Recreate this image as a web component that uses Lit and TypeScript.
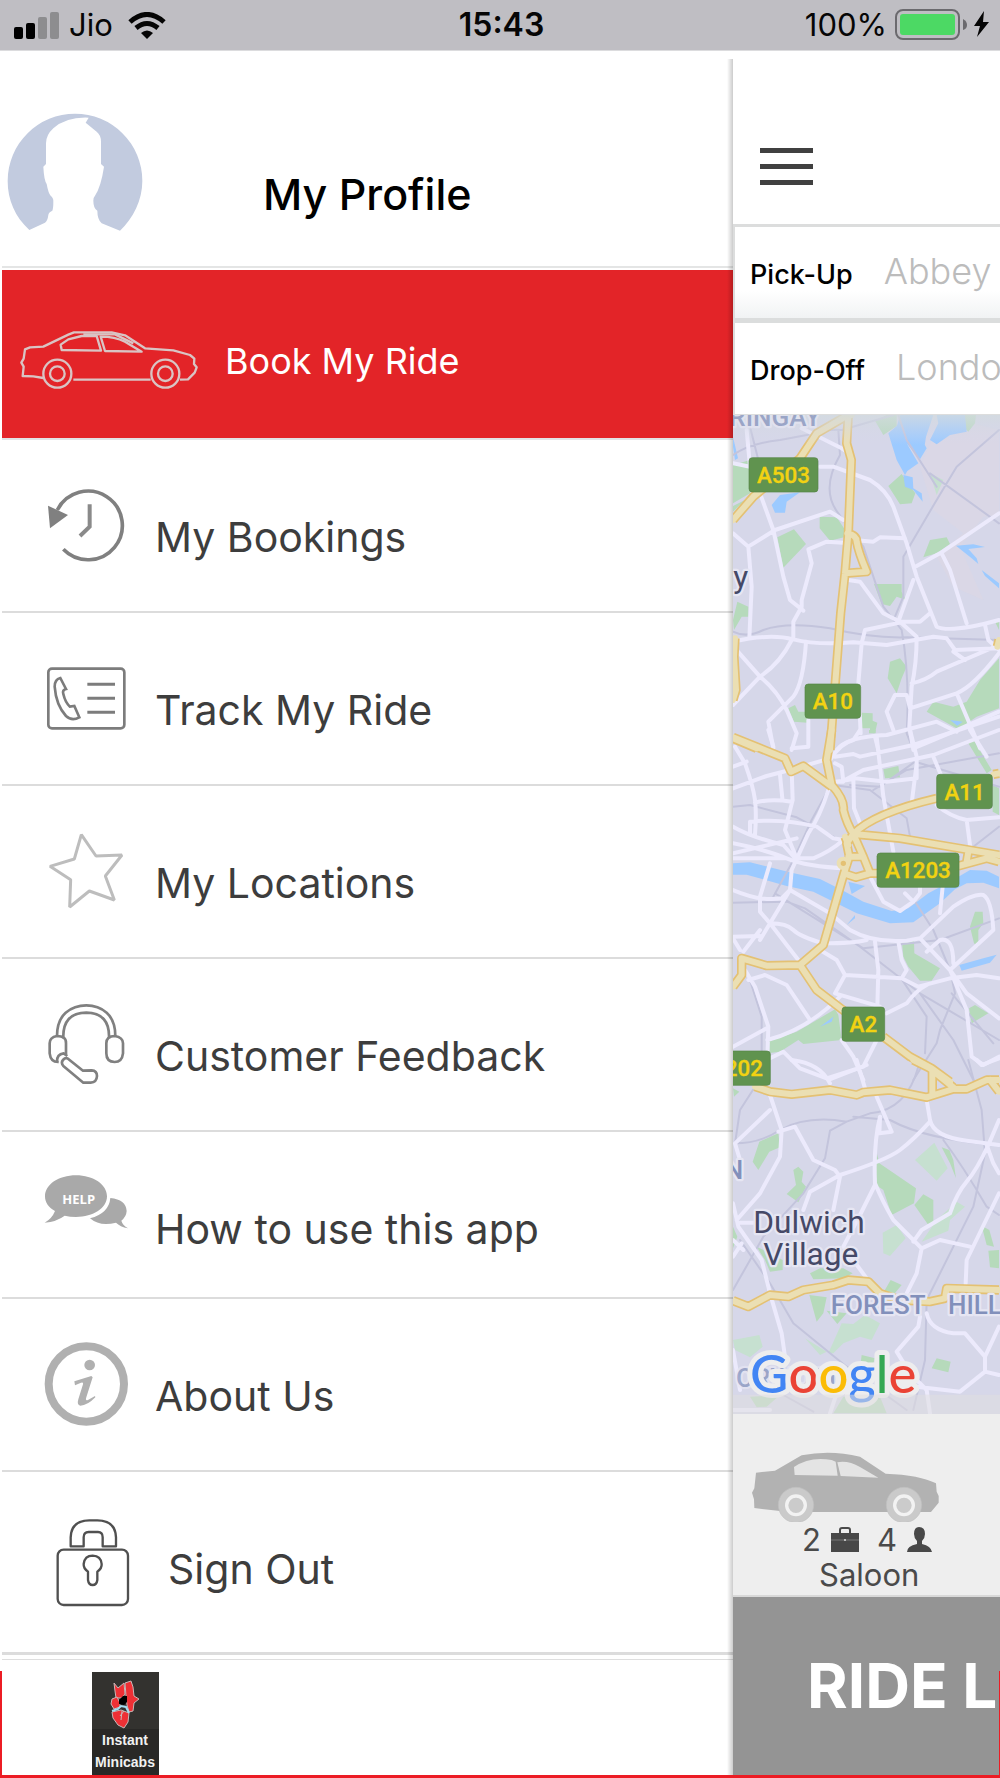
import { LitElement, html, svg, css } from "lit";
import { customElement } from "lit/decorators.js";

type Tile = { dy: number; d: string[] };

/* Map geometry. Units are thirds of a pixel; each tile covers one stretch of the map from north to south. */
const parks: Tile[] = [
  { dy: 0, d: [
    "M465 62L500 45H530V78L490 105Z", "M735 45H768L765 70 745 95 730 80Z",
    "M39 195L90 180V280L39 310Z", "M39 318L75 300 39 335Z",
    "M545 222L505 258 540 313 575 310 586 280Z",
    "M172 412L222 388 258 432 190 503Z", "M299 350L350 352 372 385V412L330 422 299 385Z",
    "M630 420L680 412 690 432 650 460 610 472Z", "M462 552H545V575L558 600 530 590 510 618 485 612Z",
    "M52 605L85 620V650L65 650 42 690 39 660Z", "M510 785L540 775 560 800 545 835 530 880 503 835Z",
    "M205 925L225 915 235 935 262 935V968L222 965Z", "M425 938L458 940V962L472 968 465 1000 450 998V985L425 985Z",
    "M837 775L780 840 740 905 700 920 640 905 620 935 715 988 770 950 837 925Z", "M825 665L837 660V690Z",
  ] },
  { dy: 990, d: [
    "M745 40L762 32 815 120 800 130Z", "M490 118L535 108 540 142 495 145Z", "M818 165L837 175V255L818 245Z", "M447 0H467V10H447Z",
    "M545 628L582 628 583 670 660 715 635 752 600 752 565 710 550 680Z", "M765 545L788 545 790 580 775 600 775 650 762 640 750 590Z",
    "M747 835L765 825 805 850 755 880Z", "M142 935L230 905 345 838 355 855 365 930 250 942 235 930 180 965 142 970Z",
  ] },
  { dy: 1980, d: [
    "M39 85L58 95 42 110Z", "M118 245L175 220 180 262 148 275 115 330 98 305Z", "M220 330L235 320 250 335 245 365 258 380 235 427 200 402 228 375Z",
    "M468 270L478 310 588 385 582 430 515 465 490 390 460 370Z", "M610 403L640 420V485L625 495 583 435Z", "M665 262L688 270 700 300 708 355 690 310Z",
    "M110 560L150 580 188 600V630L150 635 135 600Z", "M270 640L300 625 370 625 398 640 370 655 280 658Z", "M512 660L545 675 520 705 490 698Z",
    "M268 705L320 712 310 760 290 785Z", "M320 752L380 760 352 792Z", "M785 497L808 510 822 560 800 555Z", "M805 572L837 570V625L810 622Z",
    "M650 895L692 905 685 937 635 925Z", "M425 885L465 895 455 925 422 910Z", "M370 1010H480L500 1060H340Z", "M90 1010L180 1005 140 1040 110 1042Z", "M39 500L52 530 39 565Z",
  ] },
];

const lightParks: Tile[] = [
  { dy: 0, d: ["M630 220L670 240 650 285Z"] },
  { dy: 1980, d: [
    "M585 300L643 248 683 325 650 362Z", "M488 518L530 495 557 535 510 588 490 580Z", "M650 480L710 425 735 440 690 480 685 512 605 545Z",
    "M39 840L118 825 128 860 90 892 45 870Z", "M365 790L400 792 435 765 480 790 455 840 420 830 370 850 340 880 325 880Z", "M255 835L320 875 300 885Z",
  ] },
];

const heath: Tile[] = [
  { dy: 0, d: ["M720 60L837 90V345L790 350 720 440 790 600 700 560 650 470 730 400 640 330 600 200 640 110Z"] },
];

const water: Tile[] = [
  { dy: 0, d: [
    "M540 45L565 45 620 145 600 178 560 130 530 80Z", "M505 100L530 78 560 130 595 190 562 213 555 225 530 180Z",
    "M560 45H640L618 110 612 150Z", "M650 45H735L740 95 690 105 650 133 630 120 655 70Z",
    "M550 225L578 232 580 265 605 280 608 305 580 270 555 260Z", "M155 315L180 285 240 277 200 305 195 338 165 338Z",
    "M39 110L54 175 45 180 39 140Z", "M708 437L760 433 795 441 745 447 770 475 775 492 755 475Z", "M785 510L837 550V565L795 528Z",
    "M690 960L728 965 712 977Z",
  ] },
  { dy: 990, d: [
    "M39 400L90 397 215 428 300 447 370 482 430 515 515 543 565 535 625 490 690 455 750 420 800 422 837 440V475L790 458 740 460 705 478 660 520 580 577 510 580 410 550 330 510 280 485 200 468 80 434H39Z",
    "M385 455L435 468 395 492Z", "M405 555L380 585 405 565Z", "M718 705L790 685 830 674 810 698 725 722Z", "M300 890L340 860 335 875Z",
  ] },
];

const rails: Tile[] = [
  { dy: 0, d: [
    "M39 165Q90 130 180 120L260 105Q330 85 365 90L520 45", "M355 90L360 165Q300 270 355 340L400 400 430 440 490 620 545 690Q570 830 560 1000L580 1050",
    "M535 45L560 120 650 260", "M837 90L710 200 650 300 550 470V590L525 650", "M630 220L837 370", "M39 695Q80 715 130 690 200 665 330 685 450 715 560 712L837 720", "M90 80L115 180",
  ] },
  { dy: 990, d: [
    "M39 230L90 225 230 262 350 325", "M330 170L275 270 215 400 160 500", "M340 165L450 180 560 265 570 320", "M390 165L480 170 585 95 837 170", "M837 70L560 120 460 180",
    "M570 0L590 90", "M837 290L760 350", "M39 518L200 515 255 535 420 650 600 790 837 930", "M165 490L430 655 660 630 837 565", "M585 515L640 600 690 720 705 790 660 900 650 940 580 1050",
    "M540 740L620 860 615 970", "M600 790L700 930 760 1050", "M85 735L125 860V1000", "M695 790L820 940",
  ] },
  { dy: 1980, d: [
    "M105 80L60 150 45 250Q120 250 180 210 260 165 380 185L450 160Q560 150 595 20", "M380 185L330 212 315 295 250 400 130 530 39 690", "M400 170L510 180Q620 240 837 255",
    "M745 0L785 150 795 280 760 440 620 720 615 900 580 1050", "M670 240Q730 320 800 440L837 465", "M60 540L150 670 220 790 380 920 560 1050", "M190 1005L280 1055",
  ] },
];

const minor: Tile[] = [
  { dy: 0, d: [
    "M245 85L365 145 380 155", "M80 90L90 200 39 190", "M300 200H340L450 240Q500 270 520 320L560 430 590 530 650 680Q690 700 837 660", "M120 280L160 390 190 530 210 600 250 632",
    "M39 400L85 440 165 390 330 335 370 360", "M85 440L95 560 88 715", "M370 428L320 425 265 448 275 490 245 600V620L220 665V715", "M400 420L460 425 480 412 555 415", "M385 540L420 545 490 640 540 665 590 710Q590 790 575 860L568 980 580 1050",
    "M837 340L660 460 590 498", "M665 460L690 510 740 670", "M580 540L535 665H600L630 640", "M39 725Q150 700 220 718T400 727L500 735 640 710 680 715 705 750 837 745", "M540 668L435 690 425 730 415 850 422 1000",
    "M215 720Q180 790 120 830L39 915", "M45 745L120 830Q170 870 200 930L230 1000 215 1050", "M258 725Q250 850 220 890L145 965 160 1045", "M265 960V1040L215 1045", "M700 755L735 780", "M837 735L650 815Q620 840 575 850", "M837 760Q760 860 710 880L570 925 560 885H525L500 935 520 990",
    "M837 935L700 995 580 1045", "M710 880L780 1045", "M350 1050Q380 1010 500 1005L650 965 710 995", "M465 1010L475 1050", "M795 675L805 720 837 750",
  ] },
  { dy: 990, d: [
    "M45 50L75 100Q100 170 105 210T105 315", "M39 175L140 138 210 120 330 85", "M180 135L187 205", "M215 120L218 210 195 300 230 385", "M145 0L160 50", "M39 110L80 95", "M105 218Q150 205 215 215", "M325 180Q300 260 265 310L215 420 210 480 120 630",
    "M39 290Q90 320 190 345L230 390", "M90 310V275Q190 265 290 290L340 325 370 330", "M39 340Q140 360 200 385T380 415", "M39 385H200", "M39 370L230 325", "M230 385H280Q330 365 370 330", "M39 480Q120 515 185 505L210 480 330 550 390 600Q460 640 560 632L600 625 700 530Q760 490 790 495 815 510 820 600L690 720",
    "M150 400L120 500V545L150 580 235 690", "M150 580Q200 580 220 600T310 640Q400 640 440 630", "M39 620L120 618", "M70 665L120 600", "M39 625L60 660",
    "M345 100L365 110 370 155H345Q390 150 405 145L500 155 590 145V80L570 0", "M400 145L402 235 420 280", "M470 20L490 200 520 365", "M330 90Q360 40 400 30 420 0 420 0", "M345 80L400 72 420 80 580 45 837-40", "M365 155L430 120 640 75 837 0", "M640 80L665 140", "M750 0L800 80", "M590 100L575 220",
    "M650 225Q690 260 740 270L837 262", "M740 270L750 345", "M450 440L490 515 540 543 580 515 600 490V450M555 490L580 515", "M668 470L660 550",
    "M600 625L690 720 740 790 837 865", "M620 665L660 630Q700 620 700 700", "M465 635L475 720 472 830", "M535 635L545 690 560 720 545 745 595 770 690 745 770 735 837 745", "M375 735L545 745", "M300 660L350 690 375 735 345 790 480 830",
    "M75 720L105 770 145 890 142 990", "M85 750L135 735 200 765 270 870", "M39 950L140 895", "M142 930Q260 900 360 800", "M620 765Q590 780 560 820L500 850", "M690 720L740 840 755 980 790 1005 837 980", "M470 930L430 1010 320 1045 240 1015 190 965 150 985", "M365 930L400 980 430 1050",
  ] },
  { dy: 1980, d: [
    "M215 0Q300 10 330 70M325 60L440 15M410 0L435 85", "M145 90L185 210 180 290 120 400 50 480", "M150 150L45 250 60 300", "M175 215L225 200 280 300 345 330 360 350 340 450", "M600 0M620 120L630 180Q640 230 740 242L837 255", "M630 185Q580 240 540 270T360 345L270 395 250 450",
    "M470 110L515 215 478 220 480 175", "M480 170Q460 250 465 370 490 430 520 480L605 565 590 640 560 700", "M465 375L420 465 370 560 440 655", "M39 430L55 500 125 600 150 700 185 820 195 890", "M60 488H105", "M805 255Q770 330 740 365T690 460L605 510 580 545", "M605 565L660 540 750 560", "M837 400L740 600 737 670", "M800 255L820 310 837 340",
    "M837 180L805 255", "M620 760Q630 810 700 820H735L795 890V935L720 995 590 980M600 770L595 800 530 875 570 940 620 990 630 1060", "M795 890L837 800M795 935L837 945", "M39 540L70 570M39 590L65 550", "M39 1050L150 1050M39 870L60 990", "M330 1060L350 1000",
    "M770 0L785 15 837-5",
  ] },
];

const major: Tile[] = [
  { dy: 0, d: [
    "M395 45H385L380 130 394 180 385 400 375 520 362 640 345 860 330 1050", "M385 45L290 100 240 175 100 290 39 360", "M382 400Q410 405 410 425 415 455 440 515L375 520", "M45 715L42 770 48 870 39 900", "M39 1015L110 1045", "M837 720L832 740",
  ] },
  { dy: 990, d: [
    "M335 0L320 90 335 165Q375 210 370 240 380 280 400 312", "M39 22L195 85 213 125 250 108 335 170", "M837 130L820 133M650 205Q460 250 400 312L540 325 837 375", "M400 312L380 340 388 380 372 430 310 645 240 705 290 780 375 845M375 320L385 345", "M385 380H425M400 312L430 380 450 430 408 442 372 430",
    "M450 430H475M715 408L800 385 837 395M745 365L740 395", "M39 770L65 735V685L140 707 240 705", "M490 920L570 980 635 1015 690 1055",
  ] },
  { dy: 1980, d: [
    "M105 80L150 95 215 103 330 90 410 105 430 97 510 90 620 112 700 87 740 87 800 60 837 60", "M580 0L630 25 700 82M637 35V105M810 60L837 95", "M39 722L85 740 150 705 205 710 250 690 340 675 385 660 445 665 480 700 540 720 630 725 675 715 680 685 837 690",
  ] },
];

const layer = (tiles: Tile[], cls: string) => svg`
  <g class=${cls}>
    ${tiles.map((t) => svg`<path transform=${`translate(0 ${t.dy})`} d=${t.d.join(" ")}></path>`)}
  </g>`;

const shields = [
  { x: 87, y: 173, w: 207, name: "A503" },
  { x: 255, y: 852, w: 167, name: "A10" },
  { x: 650, y: 1123, w: 167, name: "A11" },
  { x: 471, y: 1359, w: 246, name: "A1203" },
  { x: 366, y: 1821, w: 128, name: "A2" },
  { x: -52, y: 1953, w: 203, name: "A202" },
];

@customElement("city-map")
export class CityMap extends LitElement {
  static styles = css`
    :host { display: block; background: #d6d7e9; }
    svg { display: block; width: 100%; height: auto; }
    .park { fill: #b6dabb; }
    .light { fill: #c6e0d0; }
    .heath { fill: #dcd7e4; opacity: 0.7; }
    .water { fill: #9ccaff; }
    .rail, .minor, .case, .major { fill: none; stroke-linejoin: round; stroke-linecap: round; }
    .rail { stroke: #c3c4dc; stroke-width: 6; }
    .minor { stroke: #eceafc; stroke-width: 12; }
    .case { stroke: #e4c173; stroke-width: 28; stroke-linecap: butt; }
    .major { stroke: #ebdfb3; stroke-width: 18; }
    .shield { fill: #60934f; stroke: #568547; stroke-width: 2; }
    .code { font: 500 67px Roboto, "Liberation Sans", sans-serif; fill: #f2d212; text-anchor: middle; stroke: #f2d212; stroke-width: 1; }
    .place { font: 400 95px Roboto, "Liberation Sans", sans-serif; fill: #454967; }
    .area { font: 500 78px Roboto, "Liberation Sans", sans-serif; fill: #8290bb; }
    .place, .area { stroke: #e6e6f3; stroke-width: 14; stroke-linejoin: round; paint-order: stroke; }
    .faded { opacity: 0.7; }
    .google { font: 500 158px Lato, "Liberation Sans", sans-serif; stroke: #ededee; stroke-width: 30; stroke-linejoin: round; paint-order: stroke; }
    .blue { fill: #4285f4; }
    .red { fill: #ea4335; }
    .yellow { fill: #fbbc05; }
    .green { fill: #34a853; }
    .veil { fill: #e0dfe0; opacity: 0.55; }
  `;

  render() {
    return html`
      <svg viewBox="39 45 801 2997" preserveAspectRatio="xMinYMin slice" role="img" aria-label="Map of London">
        <defs>
          <linearGradient id="fade" x1="0" y1="0" x2="0" y2="1">
            <stop offset="0" stop-color="#d3dbdf" stop-opacity="0.8"></stop>
            <stop offset="1" stop-color="#d6d7e9" stop-opacity="0"></stop>
          </linearGradient>
        </defs>
        ${layer(heath, "heath")} ${layer(parks, "park")} ${layer(lightParks, "light")} ${layer(water, "water")}
        ${layer(rails, "rail")} ${layer(minor, "minor")} ${layer(major, "case")} ${layer(major, "major")}
        <circle cx="370" cy="1390" r="14" fill="#e4c173" stroke="#ebdfb3" stroke-width="12"></circle>
        <rect x="39" y="45" width="801" height="90" fill="url(#fade)"></rect>
        ${shields.map((s) => svg`
          <rect class="shield" x=${s.x} y=${s.y} width=${s.w} height="103" rx="10"></rect>
          <text class="code" x=${s.x + s.w / 2} y=${s.y + 76}>${s.name}</text>`)}
        <text class="area faded" x="28" y="77">RINGAY</text>
        <text class="place" x="40" y="564">y</text>
        <text class="area" x="14" y="2337">N</text>
        <text class="place" x="100" y="2500">Dulwich</text>
        <text class="place" x="130" y="2596">Village</text>
        <text class="area" x="332" y="2742">FOREST</text>
        <text class="area" x="684" y="2742">HILL</text>
        <text class="area faded" x="48" y="2960">ORWOOD</text>
        <text class="google" x="90" y="2979"><tspan class="blue">G</tspan><tspan class="red">o</tspan><tspan class="yellow">o</tspan><tspan class="blue">g</tspan><tspan class="green">l</tspan><tspan class="red">e</tspan></text>
        <rect class="veil" x="39" y="2984" width="801" height="58"></rect>
      </svg>
    `;
  }
}

const icons = {
  bookings: svg`<svg class="icon" viewBox="6 540 459 420" aria-hidden="true">
    <path d="M190 868A103 103 0 1 0 172 750" fill="none" stroke="#808080" stroke-width="11"></path>
    <path d="M269 733V800L240 828" fill="none" stroke="#8a8a8a" stroke-width="12"></path>
    <path d="M144 737L204 765 150 805Z" fill="#808080"></path></svg>`,
  track: svg`<svg class="icon" viewBox="6 -81 459 420" aria-hidden="true">
    <g fill="none" stroke="#7c7c7c" stroke-width="8">
      <rect x="145" y="86" width="228" height="179" rx="11"></rect>
      <path d="M262 133H345M262 175H345M262 217H345" stroke-width="9"></path>
      <path d="M181 114L198 147Q186 150 190 162 196 188 210 200L223 198 238 232Q215 244 198 228 168 195 164 140 164 118 181 114Z"></path>
    </g></svg>`,
  star: svg`<svg class="icon" viewBox="6 438 459 420" aria-hidden="true">
    <path d="M244 584L288 648 366 645 316 708 343 780 268 753 209 801 212 719 150 679 223 657Z" fill="none" stroke="#bdbdbd" stroke-width="9" stroke-linejoin="bevel"></path></svg>`,
  headset: svg`<svg class="icon" viewBox="6 -63 459 420" aria-hidden="true">
    <g fill="none" stroke="#808080" stroke-width="8" stroke-linejoin="round">
      <path d="M171 168Q171 122 197 98 223 76 259 76 295 76 320 98 346 122 346 168M190 175Q187 99 259 98 330 99 327 175"></path>
      <path d="M171 168Q149 172 149 190V220Q152 247 176 246M171 168Q199 168 198 190V222"></path>
      <path d="M344 168Q369 172 369 190V220Q366 246 344 246 319 246 319 220V190Q319 168 344 168Z"></path>
      <path d="M171 246Q170 222 191 220L202 228"></path>
      <path d="M204 236L249 272 275 271Q291 272 291 288 290 307 272 308H250L190 258Q182 248 189 240 196 232 204 236Z"></path>
    </g></svg>`,
  help: svg`<svg class="icon" viewBox="6 453 459 420" aria-hidden="true">
    <path d="M331 651Q378 656 380 690 379 707 364 719 368 733 384 742 360 737 348 725 300 738 270 712 327 697 331 651Z" fill="#a9a9a9"></path>
    <path d="M228 583C280 583 321 611 321 646S280 708 228 708Q210 708 194 704 170 722 134 725 156 713 165 690C145 679 135 664 135 646 135 611 176 583 228 583Z" fill="#a9a9a9"></path>
    <text x="187" y="669" font-family="Open Sans, sans-serif" font-weight="700" font-size="39" fill="#fff">HELP</text></svg>`,
  about: svg`<svg class="icon" viewBox="6 -3 459 420" aria-hidden="true">
    <circle cx="259" cy="252" r="113" fill="none" stroke="#b0b0b0" stroke-width="24"></circle>
    <circle cx="269" cy="195" r="16" fill="#b0b0b0"></circle>
    <path d="M223 244L274 228 278 232 259 292Q255 304 264 300L285 288 286 292Q262 317 241 317 230 315 235 298L249 253Q251 245 243 248L225 256Z" fill="#b0b0b0"></path></svg>`,
  lock: svg`<svg class="icon wide" viewBox="6 516 498 420" aria-hidden="true">
    <g fill="none" stroke="#505050" stroke-width="7" stroke-linejoin="round">
      <path d="M212 739V712Q214 661 268 661H292Q346 661 348 712V739H308V712Q308 696 294 696H266Q251 696 251 712V739Z"></path>
      <rect x="173" y="749" width="211" height="166" rx="18"></rect>
      <path d="M264 815Q250 805 251 792 254 767 278 767 303 768 305 792 306 805 292 815V840Q290 855 278 855 266 855 264 840Z"></path>
    </g></svg>`,
};

const items = [
  { label: "My Bookings", icon: icons.bookings, size: "" },
  { label: "Track My Ride", icon: icons.track, size: "" },
  { label: "My Locations", icon: icons.star, size: "" },
  { label: "Customer Feedback", icon: icons.headset, size: "" },
  { label: "How to use this app", icon: icons.help, size: "short" },
  { label: "About Us", icon: icons.about, size: "" },
  { label: "Sign Out", icon: icons.lock, size: "tall" },
];

@customElement("side-menu")
export class SideMenu extends LitElement {
  static styles = css`
    :host { display: flex; flex-direction: column; padding-left: 2px; }
    a { color: inherit; text-decoration: none; }
    svg { display: block; flex: none; }
    .profile { display: flex; height: 216px; border-bottom: 2px solid #e4e5e5; }
    .avatar { width: 150px; height: 140px; margin: 50px 111px 0 0; }
    .name { padding-top: 118px; font-size: 43px; line-height: 52px; font-weight: 500; color: #000; }
    .ride { display: flex; height: 168px; margin-top: 2px; border-bottom: 2px solid #e2e4e6; background: #e32428; color: #fff; }
    .car { width: 223px; height: 168px; }
    .ride-name { padding-top: 68px; font-size: 36px; line-height: 46px; }
    .row { display: flex; box-sizing: border-box; height: 173px; border-bottom: 2px solid #dcdcdc; }
    .row.short { height: 167px; }
    .row.tall { height: 183px; border-bottom-width: 3px; }
    .icon { width: 153px; height: 140px; }
    .icon.wide { width: 166px; }
    .label { padding-top: 72px; font-size: 41px; line-height: 50px; color: #3d3d3d; }
    .footer { flex: 1; margin-top: 4px; padding: 12px 0 0 90px; border-top: 1px solid #dedede; }
    .logo { width: 67px; height: 103px; }
  `;

  render() {
    return html`
      <a class="profile" href="#profile">
        <svg class="avatar" viewBox="6 300 450 420" aria-hidden="true">
          <path fill="#c2cbdf" d="M88 690C45 650 23 600 23 543A202 202 0 0 1 427 543C427 600 400 655 360 692L305 670Q292 658 292 632 280 625 280 602 280 592 285 587 303 560 312 500L303 492V425Q303 405 290 395L257 368 266 353Q200 350 160 385 138 405 138 430V492L130 500Q132 540 140 552 145 580 152 587 161 594 160 605 160 625 157 632 145 638 145 645 143 662 135 668Z"></path>
        </svg>
        <span class="name">My Profile</span>
      </a>
      <nav>
        <a class="ride" href="#book">
          <svg class="car" viewBox="6 30 669 504" aria-hidden="true">
            <g fill="none" stroke="#d9c4c4" stroke-width="7" stroke-linejoin="round">
              <path d="M130 354L100 349 68 348 71 320 64 308 71 296 75 268 90 262 130 260 205 224 222 217H335L375 226 435 265 520 271 570 285 583 296 582 312 590 322 584 338 564 358 540 359M452 359H220"></path>
              <path d="M182 254L205 238 245 228H290L303 272 185 270ZM302 230Q345 230 375 245L425 275 315 273Z"></path>
              <path d="M250 223H345L400 250"></path>
              <circle cx="172" cy="341" r="42"></circle><circle cx="172" cy="341" r="22"></circle>
              <circle cx="496" cy="341" r="42"></circle><circle cx="496" cy="341" r="22"></circle>
            </g>
          </svg>
          <span class="ride-name">Book My Ride</span>
        </a>
        ${items.map((i) => html`<a class="row ${i.size}" href="#menu">${i.icon}<span class="label">${i.label}</span></a>`)}
      </nav>
      <div class="footer">
        <svg class="logo" viewBox="0 0 67 103" role="img" aria-label="Instant Minicabs">
          <rect width="67" height="103" fill="#33322f"></rect>
          <rect y="57" width="67" height="46" fill="#292826"></rect>
          <g fill="#ee3035" stroke="#c9b7b7" stroke-width="1">
            <path d="M22 11L26 16 32 11 33 22 30 26 24 26 23 19Z"></path>
            <path d="M33 11L39 9 41 15 42 24 47 27 42 31 41 39 37 40 35 33 34 24Z"></path>
            <path d="M20 27L25 25 28 31 28 35 22 37 19 32Z"></path>
            <path d="M20 40L29 38 37 41 36 50 32 56 26 53 21 46Z"></path>
          </g>
          <path d="M31 24L35 24V30L32 33 27 32 27 28Z" fill="#000"></path>
          <path d="M20 39L26 37 29 34 34 35 37 41" fill="none" stroke="#a4dcf0" stroke-width="2"></path>
          <path d="M30 39L29 48M32 39L28 44" stroke="#c9b7b7" stroke-width="1"></path>
          <g fill="#f1f1f1" font-family="Liberation Sans Narrow, Liberation Sans, sans-serif" font-weight="700" font-size="14" text-anchor="middle">
            <text x="33" y="73">Instant</text>
            <text x="33" y="95">Minicabs</text>
          </g>
        </svg>
      </div>
    `;
  }
}

@customElement("app-root")
export class AppRoot extends LitElement {
  static styles = css`
    :host { display: block; font-family: Inter, "Liberation Sans", sans-serif; }
    .screen { position: relative; display: flex; flex-direction: column; box-sizing: border-box; min-height: 100vh; padding-bottom: 3px; background: #fff; overflow: hidden; }
    .frame { position: absolute; left: 0; right: 0; bottom: 0; height: 104px; border: solid #ec1c24; border-width: 0 1px 3px 2px; pointer-events: none; }
    .status { display: grid; grid-template-columns: 1fr auto 1fr; align-items: center; height: 50px; padding: 0 11px 0 14px; border-bottom: 1px solid #dcdcde; margin-bottom: -1px; background: #bfbec3; color: #060606; font-size: 31px; line-height: 40px; }
    .side { display: flex; align-items: center; gap: 10px; }
    .side.end { justify-content: flex-end; gap: 8px; }
    .carrier { margin-right: 5px; }
    .clock { font-size: 32px; font-weight: 600; }
    svg { display: block; flex: none; }
    .body { flex: 1; display: grid; grid-template-columns: 733fr 267fr; }
    .main { min-width: 0; overflow: hidden; display: flex; flex-direction: column; }
    .shade { position: relative; display: flex; min-width: 0; }
    .shade::after { content: ""; position: absolute; top: 9px; right: 0; bottom: 0; width: 6px; background: linear-gradient(to right, rgba(0, 0, 0, 0), rgba(0, 0, 0, 0.2)); }
    .menu { flex: 1; min-width: 0; }
    .top { height: 174px; display: flex; align-items: flex-start; border-bottom: 3px solid #dcdddd; }
    .burger { display: flex; flex-direction: column; gap: 11px; margin: 98px 0 0 27px; padding: 0; border: 0; background: none; }
    .bar { width: 53px; height: 5px; background: #404040; }
    .field { display: flex; align-items: baseline; gap: 31px; box-sizing: border-box; padding: 22px 0 0 15px; border-left: 2px solid #dcdddd; }
    .pickup { height: 96px; border-bottom: 5px solid #dbdddd; background: linear-gradient(#fff 70%, #f1f3f4); }
    .dropoff { height: 92px; border-bottom: 1px solid #dcdddd; }
    label { flex: none; font-size: 27px; line-height: 44px; font-weight: 500; color: #000; }
    input { flex: 1 0 auto; width: 160px; height: 44px; padding: 0; border: 0; outline: 0; background: none; font: 300 36px/44px Inter, "Liberation Sans", sans-serif; }
    input::placeholder { color: #bcbcbc; opacity: 1; }
    .vehicle { display: flex; flex-direction: column; box-sizing: border-box; height: 183px; padding: 38px 0 0 19px; border-bottom: 2px solid #d8d8d8; background: #eee; color: #4a4a4a; font-size: 31px; line-height: 35px; }
    .saloon { width: 187px; height: 70px; }
    .capacity { display: flex; align-items: center; gap: 10px; padding-left: 50px; }
    .bags { margin-right: 8px; }
    .type { padding-left: 67px; }
    .later { flex: 1; min-height: 178px; padding: 0 0 0 74px; border: 0; background: #949494; color: #fff; font: 700 62px/74px Inter, "Liberation Sans", sans-serif; text-align: left; white-space: nowrap; }
  `;

  render() {
    return html`
      <div class="screen">
        <header class="status">
          <div class="side">
            <svg width="45" height="27" viewBox="0 0 45 27" aria-hidden="true">
              <rect y="15" width="9" height="12" rx="2"></rect><rect x="12" y="11" width="9" height="16" rx="2"></rect>
              <rect x="24" y="5" width="9" height="22" rx="2" fill="#8d8d8f"></rect><rect x="36" width="9" height="27" rx="2" fill="#8d8d8f"></rect>
            </svg>
            <span class="carrier">Jio</span>
            <svg width="38" height="27" viewBox="0 0 38 27" aria-hidden="true">
              <path d="M2 10Q19-5 36 10" fill="none" stroke="#050505" stroke-width="5"></path>
              <path d="M8 16Q19 7 30 16" fill="none" stroke="#050505" stroke-width="5"></path>
              <path d="M13 21Q19 16 25 21L19 27Z" fill="#050505"></path>
            </svg>
          </div>
          <span class="clock">15:43</span>
          <div class="side end">
            <span>100%</span>
            <svg width="94" height="32" viewBox="894 9 94 32" aria-hidden="true">
              <rect x="895" y="10" width="63" height="29" rx="7" fill="none" stroke="#6b6a6e" stroke-width="2"></rect>
              <rect x="899" y="14" width="55" height="21" rx="3" fill="#4cd964"></rect>
              <path d="M962 19Q966 21 966 25T962 30Z" fill="#6b6a6e"></path>
              <path d="M983 11L973 26H979L976 37 988 22H982Z" fill="#050505"></path>
            </svg>
          </div>
        </header>
        <div class="body">
          <div class="shade"><side-menu class="menu"></side-menu></div>
          <main class="main">
            <div class="top">
              <button class="burger" aria-label="Menu"><span class="bar"></span><span class="bar"></span><span class="bar"></span></button>
            </div>
            <div class="field pickup"><label for="pickup">Pick-Up</label><input id="pickup" type="text" placeholder="Abbey" /></div>
            <div class="field dropoff"><label for="dropoff">Drop-Off</label><input id="dropoff" type="text" placeholder="London" /></div>
            <city-map></city-map>
            <section class="vehicle">
              <svg class="saloon" viewBox="96 153 561 210" aria-hidden="true">
                <path d="M96 275L103 262 108 215 165 209 245 163Q330 145 420 167L497 218Q600 222 648 247L650 272 656 285V305L633 333H280L180 330 103 321 102 295Z" fill="#b2b2b2"></path>
                <path d="M222 198Q270 165 335 177L347 182 353 224 224 222ZM352 184Q385 178 420 198L475 230 362 225Z" fill="#e4e4e4"></path>
                <g stroke="#c0c0c0" stroke-width="2"><circle cx="228" cy="312" r="53" fill="#cacaca"></circle><circle cx="552" cy="312" r="53" fill="#cacaca"></circle></g>
                <g fill="#cbcbcb" stroke="#f2f2f2" stroke-width="10"><circle cx="228" cy="313" r="28"></circle><circle cx="552" cy="313" r="28"></circle></g>
              </svg>
              <div class="capacity">
                <span>2</span>
                <svg class="bags" width="28" height="25" viewBox="0 0 28 25" aria-label="bags">
                  <path d="M9 6V3Q9 1 11 1H17Q19 1 19 3V6" fill="none" stroke="#4a4a4a" stroke-width="2"></path>
                  <rect y="6" width="28" height="19" fill="#484848"></rect><path d="M0 13H28" stroke="#777" stroke-width="1"></path><circle cx="14" cy="13" r="1" fill="#ddd"></circle>
                </svg>
                <span>4</span>
                <svg width="25" height="25" viewBox="0 0 25 25" aria-label="passengers">
                  <path d="M12 0Q18 0 18 7 18 11 15 14V17Q24 19 25 25H0Q0 19 10 17V14Q7 11 7 7 7 0 12 0Z" fill="#484848"></path>
                </svg>
              </div>
              <span class="type">Saloon</span>
            </section>
            <button class="later">RIDE L</button>
          </main>
        </div>
        <div class="frame"></div>
      </div>
    `;
  }
}
